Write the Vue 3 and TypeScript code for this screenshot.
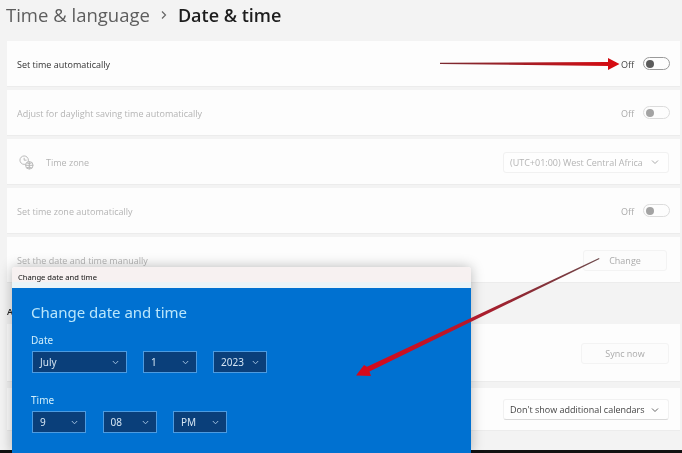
<script setup lang="ts">
interface Row { label: string; dim: boolean; kind: 'toggle' | 'select' | 'button'; value: string; icon?: boolean }
const rows: Row[] = [
  { label: 'Set time automatically', dim: false, kind: 'toggle', value: 'Off' },
  { label: 'Adjust for daylight saving time automatically', dim: true, kind: 'toggle', value: 'Off' },
  { label: 'Time zone', dim: true, kind: 'select', value: '(UTC+01:00) West Central Africa', icon: true },
  { label: 'Set time zone automatically', dim: true, kind: 'toggle', value: 'Off' },
  { label: 'Set the date and time manually', dim: true, kind: 'button', value: 'Change' },
]
const dateFields = [{ v: 'July', w: 'w-l' }, { v: '1', w: 'w-s' }, { v: '2023', w: 'w-s' }]
const timeFields = [{ v: '9', w: 'w-s' }, { v: '08', w: 'w-s' }, { v: 'PM', w: 'w-s' }]
</script>

<template>
  <div class="page">
    <header class="crumb">
      <span class="parent">Time &amp; language</span>
      <svg class="sep" width="8" height="10" viewBox="0 0 8 10"><path d="M2 1.500 5.500 5 2 8.500" fill="none" stroke="#666" stroke-width="1.200" /></svg>
      <span class="current">Date &amp; time</span>
    </header>

    <div class="cards">
      <div v-for="r in rows" :key="r.label" class="card" :class="{ dim: r.dim }">
        <svg v-if="r.icon" class="zone" width="15" height="15" viewBox="0 0 16 16" fill="none" stroke="#b5b5b5" stroke-width="1">
          <circle cx="5.500" cy="5.500" r="4.500" />
          <path d="M5.500 3v2.500H8" />
          <circle cx="11" cy="11" r="4" fill="#fdfdfd" />
          <path d="M7 11h8M11 7v8M8.500 8.500q2.500 1.200 5 0M8.500 13.500q2.500-1.200 5 0" />
        </svg>
        <span class="label" :class="{ indent: r.icon }">{{ r.label }}</span>
        <div v-if="r.kind === 'toggle'" class="right">
          <span class="off">{{ r.value }}</span>
          <span class="switch"><i></i></span>
        </div>
        <div v-else-if="r.kind === 'select'" class="select muted">
          <span>{{ r.value }}</span>
          <svg width="8" height="6" viewBox="0 0 8 6"><path d="M1 1.500 4 4.500 7 1.500" fill="none" stroke="#aaa" /></svg>
        </div>
        <div v-else class="btn">{{ r.value }}</div>
      </div>
    </div>

    <div class="section">Additional settings</div>

    <div class="cards lower">
      <div class="card sync dim">
        <div class="btn wide">Sync now</div>
      </div>
      <div class="card cal">
        <div class="select">
          <span>Don't show additional calendars</span>
          <svg width="8" height="6" viewBox="0 0 8 6"><path d="M1 1.500 4 4.500 7 1.500" fill="none" stroke="#666" /></svg>
        </div>
      </div>
    </div>

    <div class="strip"></div>

    <div class="dialog">
      <div class="titlebar">Change date and time</div>
      <div class="body">
        <h2>Change date and time</h2>
        <div class="flabel">Date</div>
        <div class="fields">
          <div v-for="f in dateFields" :key="f.v" class="field" :class="f.w">
            <span>{{ f.v }}</span>
            <svg width="7" height="5" viewBox="0 0 7 5"><path d="M.8 1 3.500 3.800 6.200 1" fill="none" stroke="#9dbcdb" stroke-width="1" /></svg>
          </div>
        </div>
        <div class="flabel time">Time</div>
        <div class="fields times">
          <div v-for="f in timeFields" :key="f.v" class="field" :class="f.w">
            <span>{{ f.v }}</span>
            <svg width="7" height="5" viewBox="0 0 7 5"><path d="M.8 1 3.500 3.800 6.200 1" fill="none" stroke="#9dbcdb" stroke-width="1" /></svg>
          </div>
        </div>
      </div>
    </div>

    <svg class="arrows" width="682" height="453" viewBox="0 0 682 453">
      <defs>
        <linearGradient id="g1" x1="0" x2="1" y1="0" y2="0">
          <stop offset="0" stop-color="#7a2a30" />
          <stop offset="0.5" stop-color="#a81c24" />
          <stop offset="1" stop-color="#d80a10" />
        </linearGradient>
        <linearGradient id="g2" x1="1" x2="0" y1="0" y2="0">
          <stop offset="0" stop-color="#6d4a4c" />
          <stop offset="0.3" stop-color="#8c2a34" />
          <stop offset="0.55" stop-color="#b8182a" />
          <stop offset="1" stop-color="#d8081a" />
        </linearGradient>
      </defs>
      <path d="M440 62.800 608 62 608 58 619.500 64 608 70 608 66 440 64Z" fill="url(#g1)" />
      <path d="M599 258 599.500 259 369.500 371.500 371 376 356 375.500 364 365 367 366.800Z" fill="url(#g2)" />
    </svg>
  </div>
</template>

<style>
html, body { margin: 0; background: #f3f3f3; }
</style>

<style scoped>
.page {
  position: relative;
  width: 682px;
  height: 453px;
  overflow: hidden;
  background: #f3f3f3;
  font-family: "Open Sans", "Liberation Sans", sans-serif;
  filter: blur(0.3px);
}
.crumb {
  height: 41px;
  box-sizing: border-box;
  padding: 0 0 11px 6px;
  display: flex;
  align-items: center;
  gap: 10px;
  font-family: "Open Sans", sans-serif;
  line-height: 26px;
}
.parent { color: #5d5d5d; font-size: 18.500px; }
.current { color: #1d1d1d; font-weight: 600; font-size: 18px; }
.cards {
  display: flex;
  flex-direction: column;
  gap: 3px;
  margin-left: 7px;
  width: 673px;
}
.card {
  height: 46px;
  box-sizing: border-box;
  background: #fdfdfd;
  border-bottom: 1px solid #ececec;
  display: flex;
  align-items: center;
  padding: 1px 10px 0 10px;
  font-size: 9px;
  color: #333;
}
.dim { color: #b4b4b4; }
.zone { margin-left: 2px; flex: none; }
.label { flex: 1; white-space: nowrap; }
.label.indent { margin-left: 12px; }
.right { display: flex; align-items: center; gap: 9px; }
.off { font-size: 9px; color: #444; }
.dim .off { color: #aaa; }
.switch {
  width: 23px;
  height: 11px;
  border: 1px solid #9a9a9a;
  border-radius: 7px;
  display: flex;
  align-items: center;
  padding-left: 2px;
  box-sizing: content-box;
  margin-top: -1px;
}
.switch i { width: 8px; height: 8px; border-radius: 50%; background: #5b5b5b; }
.dim .switch { border-color: #dcdcdc; }
.dim .switch i { background: #a3a3a3; }
.select {
  width: 166px;
  height: 21px;
  margin-right: 1px;
  box-sizing: border-box;
  display: flex;
  align-items: center;
  justify-content: space-between;
  padding: 0 9px 0 6px;
  background: #fefefe;
  border: 1px solid #f1f1f1;
  border-bottom-color: #d9d9d9;
  border-radius: 3px;
  font-size: 9px;
  color: #444;
  white-space: nowrap;
}
.select.muted { color: #b4b4b4; border-bottom-color: #f1f1f1; }
.btn {
  width: 84px;
  height: 21px;
  margin-right: 3px;
  box-sizing: border-box;
  display: flex;
  align-items: center;
  justify-content: center;
  border: 1px solid #f3f3f3;
  border-radius: 3px;
  font-size: 9px;
  color: #ababab;
  background: #fcfcfc;
}
.btn.wide { width: 88px; margin-right: 1px; }
.section {
  height: 41px;
  box-sizing: border-box;
  padding: 20px 0 0 7px;
  font-size: 9px;
  line-height: 18px;
  font-weight: 600;
  color: #222;
}
.lower { gap: 6px; }
.sync { height: 58px; justify-content: flex-end; }
.cal { height: 43px; justify-content: flex-end; }
.strip {
  position: absolute;
  left: 0;
  right: 0;
  bottom: 0;
  height: 3px;
  background: #111;
}
.dialog {
  position: absolute;
  left: 12px;
  top: 267px;
  width: 459px;
  height: 186px;
  border-radius: 3px 3px 0 0;
  overflow: hidden;
  box-shadow: 0 0 13px rgba(0, 0, 0, .28);
  font-family: "Noto Sans", "Open Sans", sans-serif;
  display: flex;
  flex-direction: column;
}
.titlebar {
  height: 21px;
  box-sizing: border-box;
  padding: 0 0 1px 6px;
  display: flex;
  align-items: center;
  background: linear-gradient(#f7f1f1 0 71%, #eaf4f8 71%);
  font-size: 7.600px;
  color: #111;
}
.body {
  flex: 1;
  background: #0071d1;
  padding: 12px 0 0 19px;
  color: #cfeafa;
}
h2 {
  margin: 0;
  font-size: 15px;
  font-weight: 400;
  line-height: 24px;
  color: #b9e6fb;
}
.flabel { margin-top: 9px; font-size: 10px; line-height: 14px; color: #cfeefb; }
.flabel.time { margin-top: 20px; }
.fields { display: flex; gap: 16px; margin-top: 4px; margin-left: 1px; }
.fields.times { gap: 16.500px; }
.field {
  height: 22px;
  box-sizing: border-box;
  border: 1px solid #4d9be0;
  background: #0a3f7a;
  display: flex;
  align-items: center;
  justify-content: space-between;
  padding: 0 7px;
  font-size: 10px;
  color: #d4e4f2;
}
.w-l { width: 95px; }
.w-s { width: 54px; }
.arrows { position: absolute; left: 0; top: 0; pointer-events: none; }
</style>
